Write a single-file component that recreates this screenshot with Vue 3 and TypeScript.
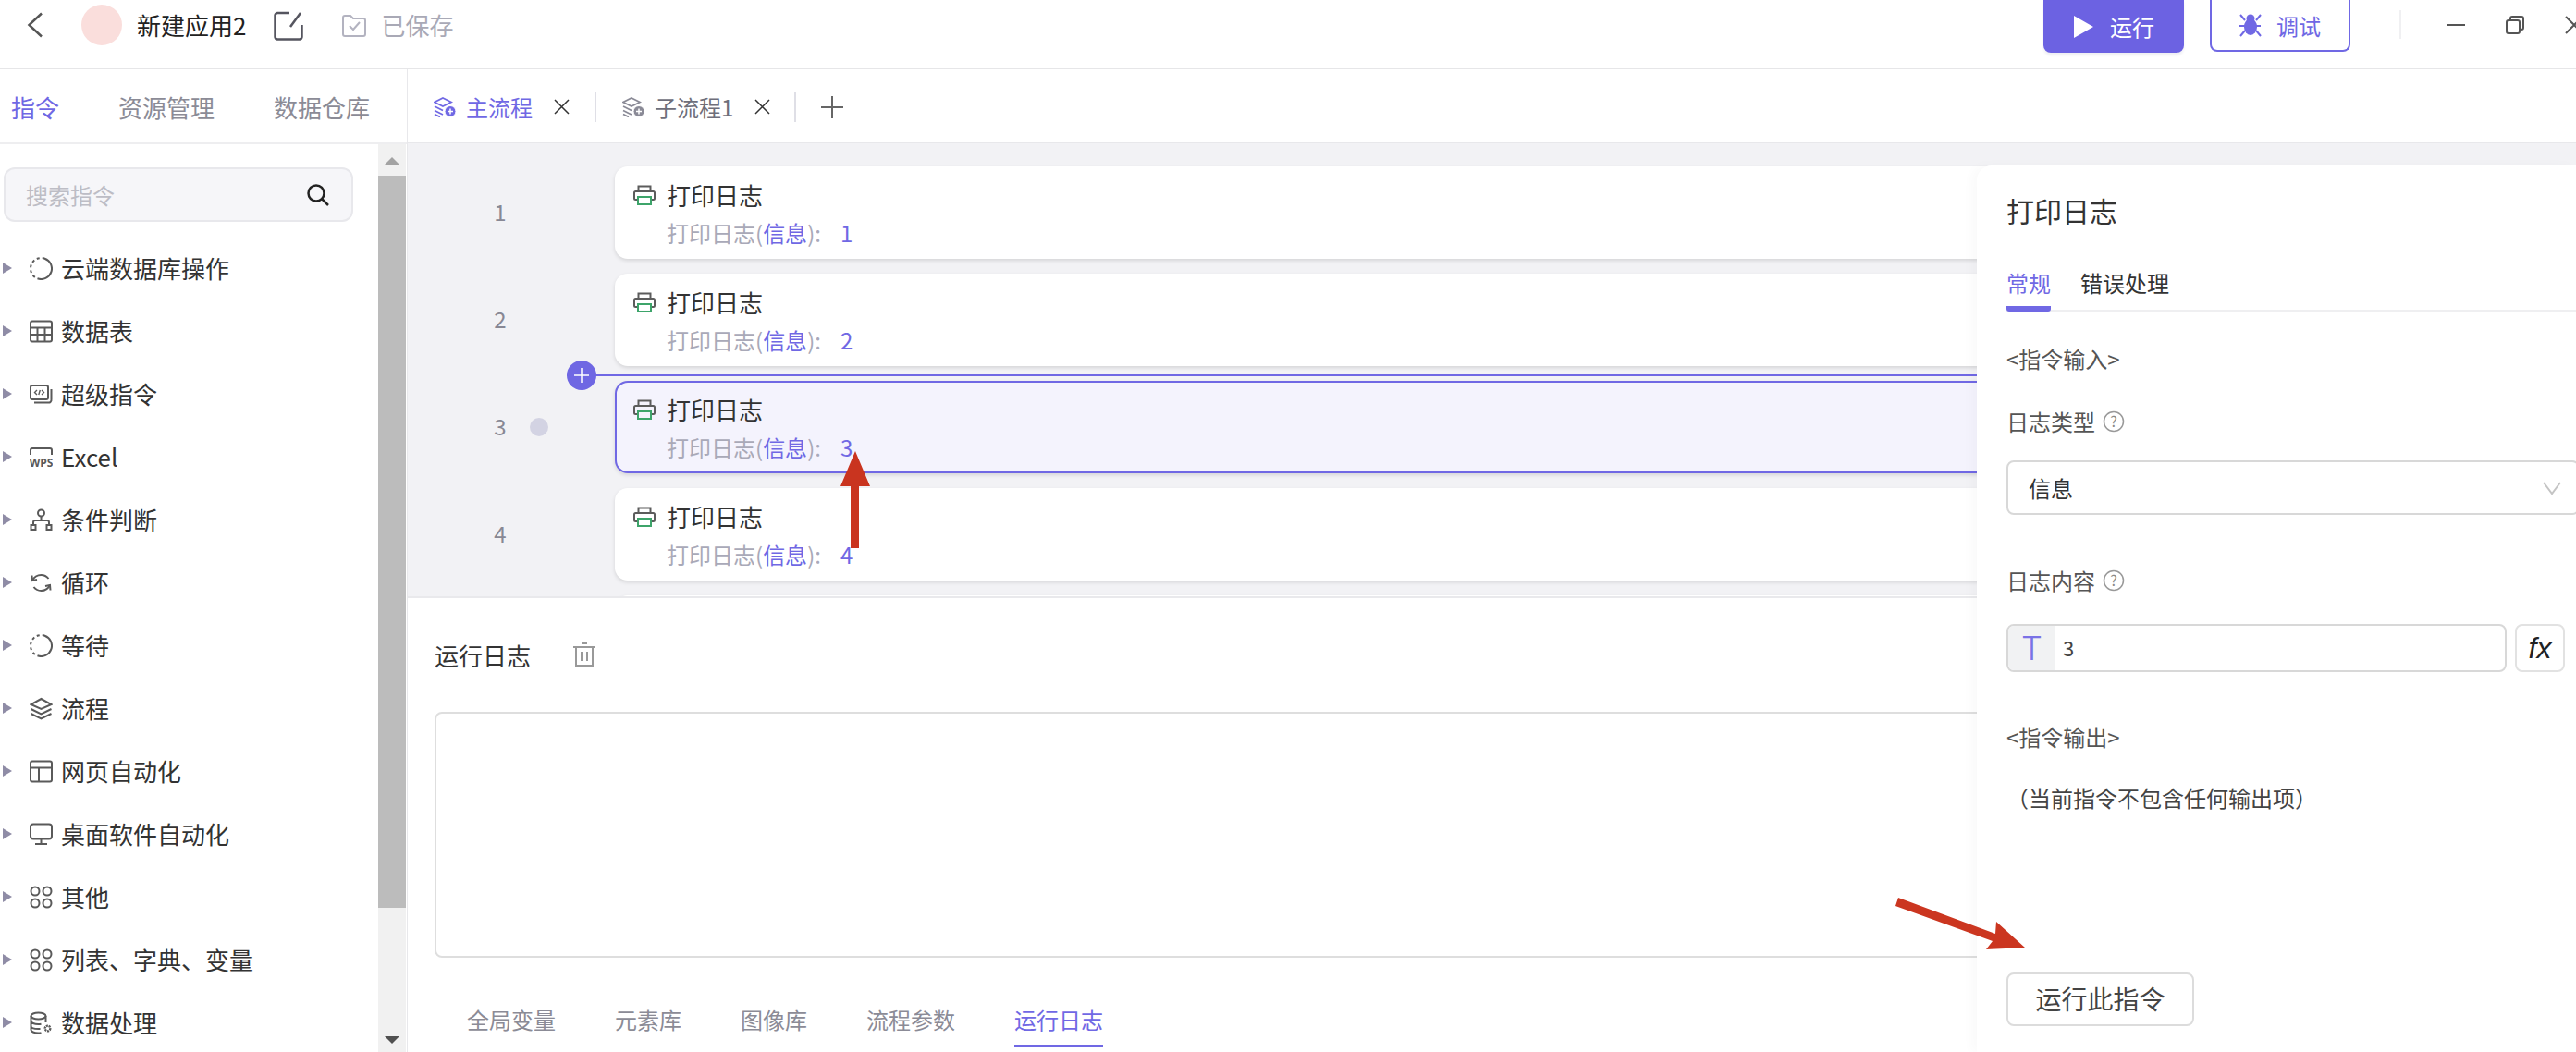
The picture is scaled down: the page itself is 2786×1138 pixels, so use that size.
<template>
  <div class="app">
    <header class="topbar">
      <svg class="back" width="18" height="28" viewBox="0 0 18 28"><path d="M16 1.500 2.500 14 16 26.500" /></svg>
      <span class="avatar"></span>
      <span class="app-name">新建应用2</span>
      <svg class="edit" width="32" height="32" viewBox="0 0 32 32">
        <path d="M17 2H4a3 3 0 0 0-2.500 2.500V28a3 3 0 0 0 2.500 2.500h24a3 3 0 0 0 2.500-2.500V15" />
        <path d="M29 2 18 17" />
      </svg>
      <svg class="saved-icon" width="26" height="24" viewBox="0 0 26 24">
        <path d="M1 3a2 2 0 0 1 2-2h6l3 3h11a2 2 0 0 1 2 2v15a2 2 0 0 1-2 2H3a2 2 0 0 1-2-2z" />
        <path d="m8 12 4 4 7-8" />
      </svg>
      <span class="saved">已保存</span>
      <span class="spacer"></span>
      <button class="btn-run">
        <svg width="21" height="24" viewBox="0 0 21 24"><path d="M0 0 21 12 0 24z" fill="#fff" /></svg>
        运行
      </button>
      <button class="btn-debug">
        <svg width="24" height="26" viewBox="0 0 24 26">
          <ellipse cx="12" cy="15" rx="7" ry="9" fill="#7068e4" />
          <circle cx="12" cy="6" r="4.500" fill="#7068e4" />
          <path d="M1 2l5 6M23 2l-5 6M0 14h23M1 25l5-6M23 25l-5-6" stroke="#7068e4" stroke-width="2" fill="none" />
        </svg>
        调试
      </button>
      <span class="win-divider"></span>
      <svg class="win-min" width="20" height="2" viewBox="0 0 20 2"><path d="M0 1h20" /></svg>
      <svg class="win-max" width="20" height="20" viewBox="0 0 20 20">
        <rect x="1" y="5" width="14" height="14" rx="2" />
        <path d="M5 5V3a2 2 0 0 1 2-2h10a2 2 0 0 1 2 2v10a2 2 0 0 1-2 2h-2" />
      </svg>
      <svg class="win-close" width="20" height="20" viewBox="0 0 20 20"><path d="M1 1l18 18M19 1 1 19" /></svg>
    </header>

    <div class="body">
      <aside class="sidebar">
        <nav class="side-tabs">
          <span class="side-tab active">指令</span>
          <span class="side-tab">资源管理</span>
          <span class="side-tab">数据仓库</span>
        </nav>
        <div class="side-body">
          <div class="side-content">
            <div class="search">
              <span>搜索指令</span>
              <svg width="24" height="24" viewBox="0 0 24 24">
                <circle cx="10" cy="10" r="8.500" />
                <path d="m16 16 7 7" />
              </svg>
            </div>
            <ul class="tree">
              <li v-for="item in treeItems" :key="item.label" class="tree-row">
                <span class="caret"></span>
                <svg class="tree-icon" width="25" height="25" viewBox="0 0 25 25">
                  <template v-if="item.icon === 'dash'">
                    <circle cx="12.500" cy="12.500" r="11.500" transform="rotate(-70 12.500 12.500)" stroke-dasharray="36 3 3 3 3 3 3 3 3 3 3 3" />
                  </template>
                  <template v-else-if="item.icon === 'table'">
                    <rect x="1" y="1.500" width="23" height="22" rx="2" />
                    <path d="M1 8.500h23M1 16h23M8.500 8.500v15M16.500 8.500v15" />
                  </template>
                  <template v-else-if="item.icon === 'code'">
                    <rect x="1" y="3" width="19" height="15" rx="2" />
                    <path d="M5 21.500h15a3 3 0 0 0 3.500-3.500V7" />
                    <path d="m8 8-2.500 2.500L8 13M13 8l2.500 2.500L13 13M11.300 8l-1.500 5" stroke-width="1.400" />
                  </template>
                  <template v-else-if="item.icon === 'wps'">
                    <path d="M1 10V5a2 2 0 0 1 2-2h19a2 2 0 0 1 2 2v5" />
                    <text x="12.500" y="23" class="wps">WPS</text>
                  </template>
                  <template v-else-if="item.icon === 'branch'">
                    <circle cx="12.500" cy="5" r="3.500" />
                    <path d="M12.500 8.500V13M4 18v-3a2 2 0 0 1 2-2h13a2 2 0 0 1 2 2v3" />
                    <rect x="1.500" y="18" width="5" height="5" />
                    <rect x="18.500" y="18" width="5" height="5" />
                  </template>
                  <template v-else-if="item.icon === 'loop'">
                    <path d="M3 10c2-4 5-6 9.500-6 3.500 0 6 1.500 8 4M22 15c-2 4-5 6-9.500 6-3.500 0-6-1.500-8-4" />
                    <path d="M2.500 4.500 3 10l5-1M22.500 20.500 22 15l-5 1" />
                  </template>
                  <template v-else-if="item.icon === 'layers'">
                    <path d="m12.500 2 11 6-11 5-11-5z" />
                    <path d="m1.500 13 11 5.500 11-5.500M1.500 18l11 5.500 11-5.500" />
                  </template>
                  <template v-else-if="item.icon === 'layout'">
                    <rect x="1" y="1.500" width="23" height="22" rx="2" />
                    <path d="M1 8.500h23M10 8.500v15" />
                  </template>
                  <template v-else-if="item.icon === 'monitor'">
                    <rect x="1" y="1.500" width="23" height="16" rx="3" />
                    <path d="M12.500 17.500v5M6 23h13" />
                  </template>
                  <template v-else-if="item.icon === 'dots'">
                    <circle cx="6" cy="6" r="4.500" />
                    <circle cx="19" cy="6" r="4.500" />
                    <circle cx="6" cy="19" r="4.500" />
                    <circle cx="19" cy="19" r="4.500" />
                  </template>
                  <template v-else>
                    <ellipse cx="9.500" cy="5" rx="8" ry="3.500" />
                    <path d="M1.500 5v15c0 2 3.500 3.500 8 3.500 1 0 2 0 3-.3M1.500 10.500c0 2 3.500 3.500 8 3.500 1 0 2-.1 3-.3M1.500 16c0 2 3.500 3 8 3h2M17.500 5v7" />
                    <circle cx="19.500" cy="18.500" r="2.800" stroke-dasharray="2 .8" stroke-width="2.400" />
                  </template>
                </svg>
                <span class="tree-label">{{ item.label }}</span>
              </li>
            </ul>
          </div>
          <div class="scrollbar">
            <span class="sb-up"></span>
            <span class="sb-thumb"></span>
            <span class="sb-down"></span>
          </div>
        </div>
      </aside>

      <main class="main">
        <nav class="flow-tabs">
          <span class="flow-tab active">
            <svg width="24" height="22" viewBox="0 0 24 22">
              <path d="m10 1 9 4.500-9 4.500-9-4.500zM1 10l9 4.500M1 14.500l9 4.500M1 18.500l6 3" />
              <circle cx="18" cy="15.500" r="6" class="tab-dot" />
              <path d="M18 12.500v6M15 15.500h6" class="tab-plus" />
            </svg>
            主流程
          </span>
          <svg class="tab-x" width="17" height="17" viewBox="0 0 17 17"><path d="m1 1 15 15M16 1 1 16" /></svg>
          <span class="tab-sep"></span>
          <span class="flow-tab">
            <svg width="24" height="22" viewBox="0 0 24 22">
              <path d="m10 1 9 4.500-9 4.500-9-4.500zM1 10l9 4.500M1 14.500l9 4.500M1 18.500l6 3" />
              <circle cx="18" cy="15.500" r="6" class="tab-dot" />
              <path d="M18 12.500v6M15 15.500h6" class="tab-plus" />
            </svg>
            子流程1
          </span>
          <svg class="tab-x" width="17" height="17" viewBox="0 0 17 17"><path d="m1 1 15 15M16 1 1 16" /></svg>
          <span class="tab-sep short"></span>
          <svg class="tab-add" width="24" height="24" viewBox="0 0 24 24"><path d="M12 0v24M0 12h24" /></svg>
        </nav>

        <section class="canvas">
          <div v-for="n in steps" :key="n" class="step" :class="{ selected: n === 3 }">
            <span class="step-num">{{ n }}</span>
            <span class="step-dot"></span>
            <div class="card">
              <div class="card-title">
                <svg width="24" height="22" viewBox="0 0 24 22">
                  <path d="M5.500 7V1.500h13V7M5 16H2.500A1.500 1.500 0 0 1 1 14.500v-6A1.500 1.500 0 0 1 2.500 7h19A1.500 1.500 0 0 1 23 8.500v6a1.500 1.500 0 0 1-1.500 1.500H19" fill="none" stroke="#5c5c5c" stroke-width="2" />
                  <rect x="5" y="13" width="14" height="8" fill="none" stroke="#3da46a" stroke-width="2" />
                </svg>
                打印日志
              </div>
              <div class="card-sub">打印日志(<em>信息</em>):<em class="value">{{ n }}</em></div>
            </div>
            <div v-if="n === 3" class="insert-line">
              <span class="insert-btn">
                <svg width="16" height="16" viewBox="0 0 16 16"><path d="M8 0v16M0 8h16" /></svg>
              </span>
            </div>
          </div>
          <div class="step">
            <span class="step-num"></span>
            <span class="step-dot"></span>
            <div class="card"></div>
          </div>
        </section>

        <section class="log-panel">
          <div class="log-head">
            <span>运行日志</span>
            <svg width="26" height="26" viewBox="0 0 26 26">
              <path d="M1 5h24M10 1h6M4 5v20h18V5M10 10v10M16 10v10" />
            </svg>
          </div>
          <div class="log-box"></div>
          <nav class="log-tabs">
            <span>全局变量</span>
            <span>元素库</span>
            <span>图像库</span>
            <span>流程参数</span>
            <span class="active">运行日志</span>
          </nav>
        </section>
      </main>
    </div>

    <aside class="inspector">
      <h2>打印日志</h2>
      <div class="ins-tabs">
        <span class="active">常规</span>
        <span>错误处理</span>
      </div>
      <p class="ins-section first">&lt;指令输入&gt;</p>
      <p class="ins-label type-label">
        日志类型
        <svg width="24" height="24" viewBox="0 0 24 24">
          <circle cx="12" cy="12" r="10.500" />
          <text x="12" y="18" class="q">?</text>
        </svg>
      </p>
      <div class="select">
        <span>信息</span>
        <svg width="20" height="14" viewBox="0 0 20 14"><path d="m1 1 9 12 9-12" /></svg>
      </div>
      <p class="ins-label content-label">
        日志内容
        <svg width="24" height="24" viewBox="0 0 24 24">
          <circle cx="12" cy="12" r="10.500" />
          <text x="12" y="18" class="q">?</text>
        </svg>
      </p>
      <div class="input-row">
        <div class="text-input">
          <span class="t-cell">T</span>
          <span class="t-value">3</span>
        </div>
        <button class="fx"><i>fx</i></button>
      </div>
      <p class="ins-section output">&lt;指令输出&gt;</p>
      <p class="none">（当前指令不包含任何输出项）</p>
      <button class="run-one">运行此指令</button>
    </aside>

    <!-- annotation arrows drawn on top of the screenshot -->
    <svg class="arrows" width="2786" height="1138" viewBox="0 0 2786 1138">
      <path d="M920 526h-11l16-38 16 38h-12v67h-9z" fill="#c9341f" />
      <path d="M2053 971 2158 1010 2159 997 2190 1025 2148 1027 2155 1018 2050 980z" fill="#cb3620" />
    </svg>
  </div>
</template>

<script setup lang="ts">
interface TreeItem {
  label: string
  icon: string
}

const treeItems: TreeItem[] = [
  { label: '云端数据库操作', icon: 'dash' },
  { label: '数据表', icon: 'table' },
  { label: '超级指令', icon: 'code' },
  { label: 'Excel', icon: 'wps' },
  { label: '条件判断', icon: 'branch' },
  { label: '循环', icon: 'loop' },
  { label: '等待', icon: 'dash' },
  { label: '流程', icon: 'layers' },
  { label: '网页自动化', icon: 'layout' },
  { label: '桌面软件自动化', icon: 'monitor' },
  { label: '其他', icon: 'dots' },
  { label: '列表、字典、变量', icon: 'dots' },
  { label: '数据处理', icon: 'data' },
]

const steps = [1, 2, 3, 4]
</script>

<style>
html,
body {
  margin: 0;
  background: #fff;
}
</style>

<style scoped>
.app {
  position: relative;
  width: 2786px;
  height: 1138px;
  overflow: hidden;
  display: flex;
  flex-direction: column;
  background: #fff;
  color: #333;
  font-family: "Noto Sans CJK SC", "Noto Sans", sans-serif;
  font-size: 24px;
}
svg {
  flex: none;
  display: block;
}
button {
  font-family: inherit;
}
p,
h2,
ul {
  margin: 0;
  padding: 0;
  font-weight: 400;
}

/* top bar */
.topbar {
  height: 75px;
  flex: none;
  display: flex;
  align-items: flex-start;
  box-sizing: border-box;
  padding-left: 29px;
  border-bottom: 1px solid #e6e6e8;
}
.back {
  margin-top: 13px;
  fill: none;
  stroke: #555;
  stroke-width: 2.500;
}
.avatar {
  width: 44px;
  height: 44px;
  margin: 5px 0 0 41px;
  border-radius: 50%;
  background: #fadedc;
}
.app-name {
  margin: 7px 0 0 16px;
  font-size: 26px;
  line-height: 40px;
  color: #222;
}
.edit {
  margin: 12px 0 0 30px;
  fill: none;
  stroke: #55555f;
  stroke-width: 2.500;
}
.saved-icon {
  margin: 16px 0 0 42px;
  fill: none;
  stroke: #b3b3c0;
  stroke-width: 2;
}
.saved {
  margin: 7px 0 0 16px;
  font-size: 26px;
  line-height: 40px;
  color: #a9a9b6;
}
.spacer {
  flex: 1;
}
.btn-run,
.btn-debug {
  display: flex;
  align-items: center;
  box-sizing: border-box;
  width: 152px;
  height: 57px;
  padding: 0 0 0 33px;
  gap: 18px;
  font-size: 24px;
  border-radius: 0 0 8px 8px;
}
.btn-run {
  border: none;
  background: #6c62e2;
  color: #fff;
  box-shadow: 0 3px 3px #f0f0f4;
}
.btn-debug {
  margin-left: 28px;
  height: 56px;
  padding-left: 30px;
  gap: 16px;
  background: #fff;
  border: 2px solid #7068e4;
  border-top: none;
  color: #7068e4;
}
.win-divider {
  width: 2px;
  height: 31px;
  margin: 11px 0 0 53px;
  background: #f0f0f2;
}
.win-min {
  margin: 26px 0 0 49px;
  fill: none;
  stroke: #555;
  stroke-width: 2;
}
.win-max {
  margin: 17px 0 0 44px;
  fill: none;
  stroke: #555;
  stroke-width: 2;
}
.win-close {
  margin: 17px -8px 0 44px;
  fill: none;
  stroke: #555;
  stroke-width: 2;
}

.body {
  flex: 1;
  min-height: 0;
  display: flex;
}

/* left panel */
.sidebar {
  width: 440px;
  flex: none;
  display: flex;
  flex-direction: column;
}
.side-tabs {
  height: 79px;
  flex: none;
  box-sizing: border-box;
  display: flex;
  align-items: center;
  gap: 64px;
  padding: 2px 0 0 12px;
  font-size: 26px;
  color: #8b8b96;
}
.side-tab.active {
  color: #7068e4;
}
.side-body {
  flex: 1;
  min-height: 0;
  display: flex;
  border-top: 2px solid #eeeef0;
}
.side-content {
  width: 409px;
  flex: none;
}
.search {
  margin: 25px 0 0 4px;
  width: 378px;
  height: 59px;
  box-sizing: border-box;
  display: flex;
  align-items: center;
  justify-content: space-between;
  padding: 0 24px 0 22px;
  background: #f6f6f9;
  border: 2px solid #e8e8ec;
  border-radius: 12px;
  color: #bdbdc5;
}
.search svg {
  fill: none;
  stroke: #222;
  stroke-width: 2.500;
}
.tree {
  list-style: none;
  margin-top: 16px;
}
.tree-row {
  height: 68px;
  display: flex;
  align-items: center;
  padding-left: 3px;
  font-size: 26px;
  color: #333;
}
.caret {
  width: 0;
  height: 0;
  border-left: 10px solid #8f8ca6;
  border-top: 6px solid transparent;
  border-bottom: 6px solid transparent;
}
.tree-icon {
  margin-left: 19px;
  fill: none;
  stroke: #5a5a5a;
  stroke-width: 2;
}
.wps {
  font-family: "Open Sans", sans-serif;
  font-size: 12px;
  font-weight: 700;
  text-anchor: middle;
  fill: #5a5a5a;
  stroke: none;
}
.tree-label {
  margin: 0 0 2px 9px;
  white-space: nowrap;
}
.scrollbar {
  width: 30px;
  flex: none;
  background: #f1f1f1;
  display: flex;
  flex-direction: column;
  align-items: center;
}
.sb-up {
  width: 0;
  height: 0;
  margin-top: 14px;
  border-left: 9px solid transparent;
  border-right: 9px solid transparent;
  border-bottom: 9px solid #a3a3a3;
}
.sb-thumb {
  width: 30px;
  height: 792px;
  margin-top: 11px;
  background: #bcbcbc;
}
.sb-down {
  width: 0;
  height: 0;
  margin-top: 139px;
  border-left: 8px solid transparent;
  border-right: 8px solid transparent;
  border-top: 8px solid #505050;
}

/* centre */
.main {
  flex: 1;
  min-width: 0;
  display: flex;
  flex-direction: column;
  border-left: 1px solid #e8e8eb;
}
.flow-tabs {
  height: 80px;
  flex: none;
  box-sizing: border-box;
  display: flex;
  align-items: center;
  padding: 2px 0 0 28px;
  border-bottom: 1px solid #e8e8eb;
}
.flow-tab {
  display: flex;
  align-items: center;
  gap: 11px;
  color: #6e6e7a;
}
.flow-tab svg {
  fill: none;
  stroke: #8a8a96;
  stroke-width: 1.800;
}
.flow-tab .tab-dot {
  fill: #8a8a96;
  stroke: #fff;
  stroke-width: 1;
}
.flow-tab .tab-plus {
  stroke: #fff;
  stroke-width: 1.500;
}
.flow-tab.active {
  color: #7068e4;
}
.flow-tab.active svg {
  stroke: #7068e4;
}
.flow-tab.active .tab-dot {
  fill: #7068e4;
  stroke: #fff;
}
.flow-tab.active .tab-plus {
  stroke: #fff;
}
.tab-x {
  margin-left: 23px;
  fill: none;
  stroke: #333;
  stroke-width: 1.500;
}
.tab-sep {
  width: 2px;
  height: 32px;
  margin: 0 28px 0 27px;
  background: #dfdfe6;
}
.tab-sep.short {
  margin: 0 27px 0 26px;
}
.tab-add {
  fill: none;
  stroke: #666;
  stroke-width: 2;
}
.canvas {
  height: 490px;
  flex: none;
  box-sizing: border-box;
  padding-top: 25px;
  overflow: hidden;
  background: #f2f2f5;
}
.step {
  position: relative;
  height: 100px;
  margin-bottom: 16px;
  display: flex;
  align-items: center;
  padding-left: 80px;
}
.step-num {
  width: 40px;
  margin-bottom: 3px;
  text-align: center;
  color: #888894;
  font-size: 24px;
}
.step-dot {
  width: 20px;
  height: 20px;
  margin-left: 12px;
  border-radius: 50%;
}
.selected .step-dot {
  background: #d3d3e3;
}
.card {
  width: 1495px;
  height: 100px;
  margin-left: 72px;
  box-sizing: border-box;
  padding: 10px 0 0 20px;
  background: #fff;
  border-radius: 14px;
  box-shadow: 0 2px 4px rgba(0, 0, 0, 0.12);
}
.selected .card {
  padding: 8px 0 0 18px;
  background: #f4f3fd;
  border: 2px solid #7068e4;
}
.card-title {
  display: flex;
  align-items: center;
  gap: 12px;
  height: 40px;
  font-size: 26px;
  color: #333;
}
.card-title svg {
  margin-top: 2px;
}
.card-sub {
  margin-top: 2px;
  padding-left: 36px;
  line-height: 40px;
  font-size: 24px;
  color: #a9a9b8;
}
.card-sub em {
  font-style: normal;
  color: #7068e4;
}
.card-sub .value {
  margin-left: 21px;
}
.insert-line {
  position: absolute;
  left: 172px;
  right: 600px;
  top: -7px;
  height: 2px;
  background: #7068e4;
}
.insert-btn {
  position: absolute;
  left: 0;
  top: -15px;
  width: 32px;
  height: 32px;
  display: flex;
  align-items: center;
  justify-content: center;
  border-radius: 50%;
  background: #6f67e3;
}
.insert-btn svg {
  fill: none;
  stroke: #fff;
  stroke-width: 1.500;
}

/* run log */
.log-panel {
  flex: 1;
  min-height: 0;
  box-sizing: border-box;
  padding-left: 29px;
  border-top: 2px solid #e9e9ec;
  overflow: hidden;
}
.log-head {
  display: flex;
  align-items: center;
  gap: 45px;
  height: 40px;
  margin-top: 41px;
  font-size: 26px;
  color: #333;
}
.log-head svg {
  fill: none;
  stroke: #999;
  stroke-width: 2;
}
.log-box {
  width: 1720px;
  height: 266px;
  margin-top: 42px;
  box-sizing: border-box;
  border: 2px solid #dedede;
  border-radius: 8px;
}
.log-tabs {
  display: flex;
  gap: 64px;
  margin: 49px 0 0 35px;
  color: #8b8b96;
}
.log-tabs span {
  height: 48px;
  line-height: 36px;
  box-sizing: content-box;
}
.log-tabs .active {
  color: #7068e4;
  border-bottom: 3px solid #7068e4;
  height: 45px;
}

/* right inspector */
.inspector {
  position: absolute;
  left: 2138px;
  top: 179px;
  right: 0;
  bottom: 0;
  box-sizing: border-box;
  padding-left: 32px;
  background: #fff;
  border-top-left-radius: 16px;
  box-shadow: -6px 0 12px rgba(0, 0, 0, 0.025);
  overflow: hidden;
}
.inspector h2 {
  margin-top: 28px;
  font-size: 30px;
  line-height: 40px;
  color: #333;
}
.ins-tabs {
  display: flex;
  gap: 32px;
  height: 46px;
  margin-top: 44px;
  box-shadow: inset 0 -2px #efeff1;
  line-height: 30px;
  color: #333;
}
.ins-tabs .active {
  color: #7068e4;
  height: 40px;
  border-bottom: 6px solid #7068e4;
  border-radius: 0 0 3px 3px;
}
.ins-section,
.ins-label {
  display: flex;
  align-items: center;
  gap: 8px;
  line-height: 32px;
  color: #555;
}
.ins-section.first {
  margin-top: 35px;
}
.ins-label svg {
  fill: none;
  stroke: #999;
  stroke-width: 1.500;
}
.q {
  font-size: 16px;
  text-anchor: middle;
  fill: #888;
  stroke: none;
}
.type-label {
  margin-top: 36px;
}
.select {
  width: 620px;
  height: 59px;
  margin-top: 26px;
  box-sizing: border-box;
  display: flex;
  align-items: center;
  justify-content: space-between;
  padding: 0 18px 0 22px;
  border: 2px solid #d8d8d8;
  border-radius: 8px;
  color: #333;
}
.select svg {
  fill: none;
  stroke: #c4c4c4;
  stroke-width: 2;
}
.content-label {
  margin-top: 55px;
}
.input-row {
  display: flex;
  gap: 9px;
  height: 52px;
  margin-top: 31px;
}
.text-input {
  width: 541px;
  box-sizing: border-box;
  display: flex;
  align-items: center;
  border: 2px solid #d8d8d8;
  border-radius: 8px;
  overflow: hidden;
}
.t-cell {
  width: 51px;
  height: 100%;
  display: flex;
  align-items: center;
  justify-content: center;
  background: #f1f2f3;
  color: #7a72e6;
  font-family: "Inter", sans-serif;
  font-size: 36px;
  font-weight: 300;
}
.t-value {
  margin: 0 0 3px 8px;
  font-size: 22px;
  color: #444;
}
.fx {
  width: 54px;
  padding: 0;
  background: #fff;
  border: 2px solid #e2e2e2;
  border-radius: 8px;
  font-family: "Liberation Sans", sans-serif;
  font-size: 32px;
  color: #222;
}
.output {
  margin-top: 54px;
}
.none {
  margin-top: 34px;
  line-height: 32px;
  color: #444;
}
.run-one {
  display: block;
  width: 203px;
  height: 58px;
  margin-top: 173px;
  padding: 0 0 3px;
  background: #fff;
  border: 2px solid #dcdcdc;
  border-radius: 8px;
  font-size: 28px;
  color: #444;
}
.arrows {
  position: absolute;
  left: 0;
  top: 0;
  pointer-events: none;
}
</style>
